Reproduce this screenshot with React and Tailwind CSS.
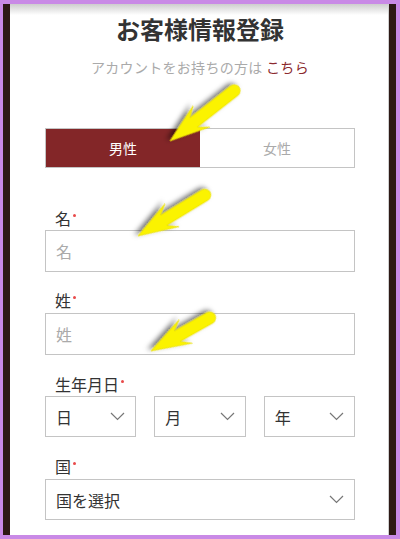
const FONT = { fontFamily: '"Noto Sans CJK JP", "Noto Sans", sans-serif' };

function Arrow({ x1, y1, x2, y2 }) {
  const sw = 12;
  const hw = 27;
  const hl = 40;
  const notch = 10;
  const dx = x2 - x1;
  const dy = y2 - y1;
  const len = Math.sqrt(dx * dx + dy * dy) - sw / 2;
  const deg = (Math.atan2(dy, dx) * 180) / Math.PI;
  const d = `M 0 0 L ${-hl} ${-hw / 2} L ${-hl + notch} ${-sw / 2} L ${-len} ${-sw / 2} A ${sw / 2} ${sw / 2} 0 0 0 ${-len} ${sw / 2} L ${-hl + notch} ${sw / 2} L ${-hl} ${hw / 2} Z`;
  return (
    <g transform={`translate(${x2} ${y2}) rotate(${deg})`} filter="url(#arrowShadow)">
      <path d={d} fill="#fbf300" stroke="#e6dc00" strokeWidth="0.6" strokeLinejoin="round" />
    </g>
  );
}

function Chevron() {
  return (
    <svg width="15" height="9" viewBox="0 0 15 9" className="shrink-0">
      <polyline points="1,1 7.5,7.5 14,1" fill="none" stroke="#777" strokeWidth="1.2" />
    </svg>
  );
}

function Label({ text, className = '' }) {
  return (
    <div className={`flex items-start pl-[10px] h-[20px] leading-[20px] text-[16px] text-[#333] ${className}`}>
      <span>{text}</span>
      <span className="mt-[6px] ml-[2px] w-[3px] h-[3px] rounded-full bg-[#e84a4a]" />
    </div>
  );
}

function SelectBox({ text, className = '' }) {
  return (
    <div className={`flex items-center justify-between h-[41px] border border-[#c4c4c4] pl-[10px] pr-[10px] text-[16px] text-[#333] ${className}`}>
      <span>{text}</span>
      <Chevron />
    </div>
  );
}

export default function App() {
  return (
    <div className="relative w-[400px] h-[539px] bg-[#c98ae6] pt-[4px] pl-[3px] pr-[4px] pb-[4px]" style={FONT}>
      <div className="flex h-full bg-[#2d1915] px-[7px]">
        <div className="relative flex-1 bg-white border-r border-[#cfcfcf] overflow-hidden">
          <div className="absolute left-0 right-0 top-0 h-[11px] bg-gradient-to-b from-[#cdcdcd] to-white" />
          <div className="relative px-[35px] pr-[33px] pt-[9px]">
            <h1 className="text-center text-[24px] leading-[32px] font-bold text-[#333]">お客様情報登録</h1>
            <p className="mt-[12px] text-center text-[14px] leading-[20px] tracking-[0.3px] text-[#aaa]">
              アカウントをお持ちの方は <span className="text-[#8b2a2e]">こちら</span>
            </p>

            <div className="mt-[51px] flex h-[40px] border border-[#c4c4c4] text-[14px]">
              <div className="flex-1 flex items-center justify-center bg-[#832628] text-white">男性</div>
              <div className="flex-1 flex items-center justify-center text-[#aaa]">女性</div>
            </div>

            <Label text="名" className="mt-[40px]" />
            <div className="mt-[2px] flex items-center h-[42px] border border-[#c4c4c4] pl-[10px] text-[16px] text-[#aaa]">名</div>

            <Label text="姓" className="mt-[18px]" />
            <div className="mt-[3px] flex items-center h-[42px] border border-[#c4c4c4] pl-[10px] text-[16px] text-[#aaa]">姓</div>

            <Label text="生年月日" className="mt-[19px]" />
            <div className="mt-[2px] grid grid-cols-3 gap-[18px]">
              <SelectBox text="日" />
              <SelectBox text="月" />
              <SelectBox text="年" />
            </div>

            <Label text="国" className="mt-[19px]" />
            <SelectBox text="国を選択" className="mt-[3px]" />
          </div>
        </div>
      </div>

      <svg className="absolute inset-0 pointer-events-none" width="400" height="539">
        <defs>
          <filter id="arrowShadow" x="-50%" y="-50%" width="200%" height="200%">
            <feDropShadow dx="2" dy="3" stdDeviation="2.5" floodColor="#000" floodOpacity="0.55" />
          </filter>
        </defs>
        <Arrow x1={239} y1={87} x2={170} y2={141} />
        <Arrow x1={210} y1={192} x2={138} y2={236} />
        <Arrow x1={215} y1={315} x2={151} y2={351} />
      </svg>
    </div>
  );
}
